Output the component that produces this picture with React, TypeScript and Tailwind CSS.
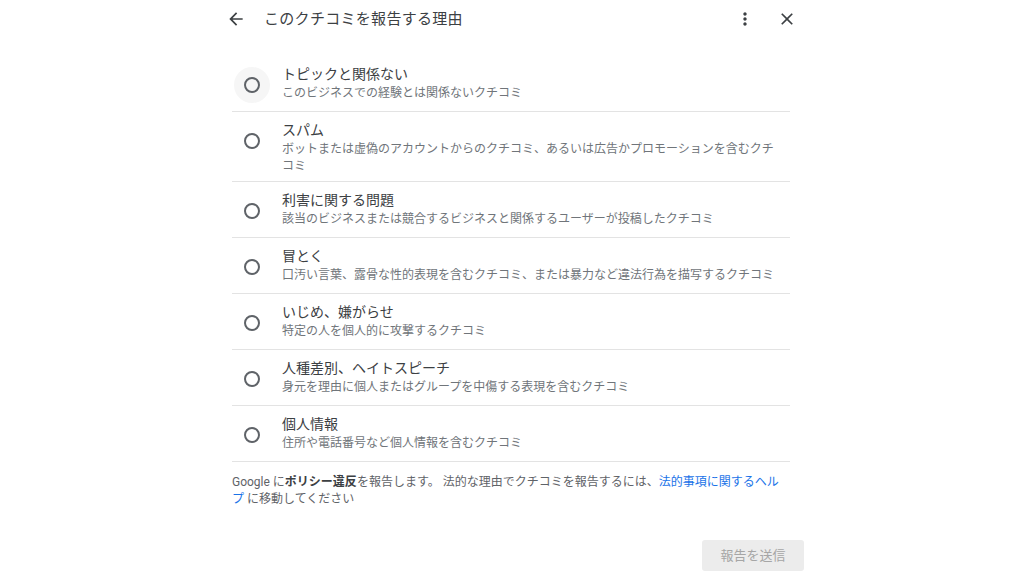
import React from "react";

const reasons = [
  { title: "トピックと関係ない", desc: "このビジネスでの経験とは関係ないクチコミ" },
  {
    title: "スパム",
    desc: "ボットまたは虚偽のアカウントからのクチコミ、あるいは広告かプロモーションを含むクチコミ",
  },
  {
    title: "利害に関する問題",
    desc: "該当のビジネスまたは競合するビジネスと関係するユーザーが投稿したクチコミ",
  },
  {
    title: "冒とく",
    desc: "口汚い言葉、露骨な性的表現を含むクチコミ、または暴力など違法行為を描写するクチコミ",
  },
  { title: "いじめ、嫌がらせ", desc: "特定の人を個人的に攻撃するクチコミ" },
  {
    title: "人種差別、ヘイトスピーチ",
    desc: "身元を理由に個人またはグループを中傷する表現を含むクチコミ",
  },
  { title: "個人情報", desc: "住所や電話番号など個人情報を含むクチコミ" },
];

function Icon({ d }: { d: string }) {
  return (
    <svg viewBox="0 0 24 24" className="w-[20px] h-[20px]" fill="#3c4043">
      <path d={d} />
    </svg>
  );
}

function ReasonRow({
  title,
  desc,
  focused,
}: {
  title: string;
  desc: string;
  focused?: boolean;
}) {
  return (
    <div className="flex items-start min-h-[56px] pt-[7px] pb-[8px] border-b border-[#e3e3e3] font-['Noto_Sans_CJK_JP',sans-serif]">
      <div className="w-[40px] flex justify-center mt-[4px]">
        <div
          className={
            "w-[36px] h-[36px] rounded-full flex items-center justify-center " +
            (focused ? "bg-[#f6f6f6]" : "")
          }
        >
          <div className="w-[16px] h-[16px] rounded-full border-2 border-[#5f6368]" />
        </div>
      </div>
      <div className="ml-[10px] pr-[12px] flex-1">
        <div className="text-[14px] leading-[20px] text-[#3c4043]">{title}</div>
        <div className="text-[12px] leading-[17px] text-[#70757a]">{desc}</div>
      </div>
    </div>
  );
}

export default function App() {
  return (
    <div className="w-full h-[576px] bg-white flex justify-center overflow-hidden font-['Roboto','Noto_Sans_CJK_JP',sans-serif]">
      <div className="w-[584px] flex flex-col">
        <div className="h-[38px] flex items-center">
          <div className="w-[32px] flex justify-center">
            <Icon d="M20 11H7.83l5.59-5.59L12 4l-8 8 8 8 1.41-1.41L7.83 13H20v-2z" />
          </div>
          <div className="ml-[12px] text-[15px] tracking-[0.3px] text-[#3c4043] flex-1">
            このクチコミを報告する理由
          </div>
          <div className="w-[34px] flex justify-center">
            <Icon d="M12 8c1.1 0 2-.9 2-2s-.9-2-2-2-2 .9-2 2 .9 2 2 2zm0 2c-1.1 0-2 .9-2 2s.9 2 2 2 2-.9 2-2-.9-2-2-2zm0 6c-1.1 0-2 .9-2 2s.9 2 2 2 2-.9 2-2-.9-2-2-2z" />
          </div>
          <div className="w-[34px] ml-[8px] flex justify-center">
            <Icon d="M19 6.41L17.59 5 12 10.59 6.41 5 5 6.41 10.59 12 5 17.59 6.41 19 12 13.41 17.59 19 19 17.59 13.41 12z" />
          </div>
        </div>

        <div className="mt-[18px] pl-[12px] pr-[14px]">
          {reasons.map((r, i) => (
            <ReasonRow key={r.title} title={r.title} desc={r.desc} focused={i === 0} />
          ))}
          <p className="mt-[12px] text-[12px] leading-[17px] text-[#5f6368]">
            Google に<span className="font-bold text-[#3c4043]">ポリシー違反</span>
            を報告します。 法的な理由でクチコミを報告するには、
            <span className="text-[#1a73e8]">法的事項に関するヘルプ</span> に移動してください
          </p>
        </div>

        <div className="flex justify-end mt-auto mb-[5px]">
          <button className="w-[102px] h-[31px] rounded-[3px] bg-[#ececec] text-[13px] text-[#a6a6a6]">
            報告を送信
          </button>
        </div>
      </div>
    </div>
  );
}
